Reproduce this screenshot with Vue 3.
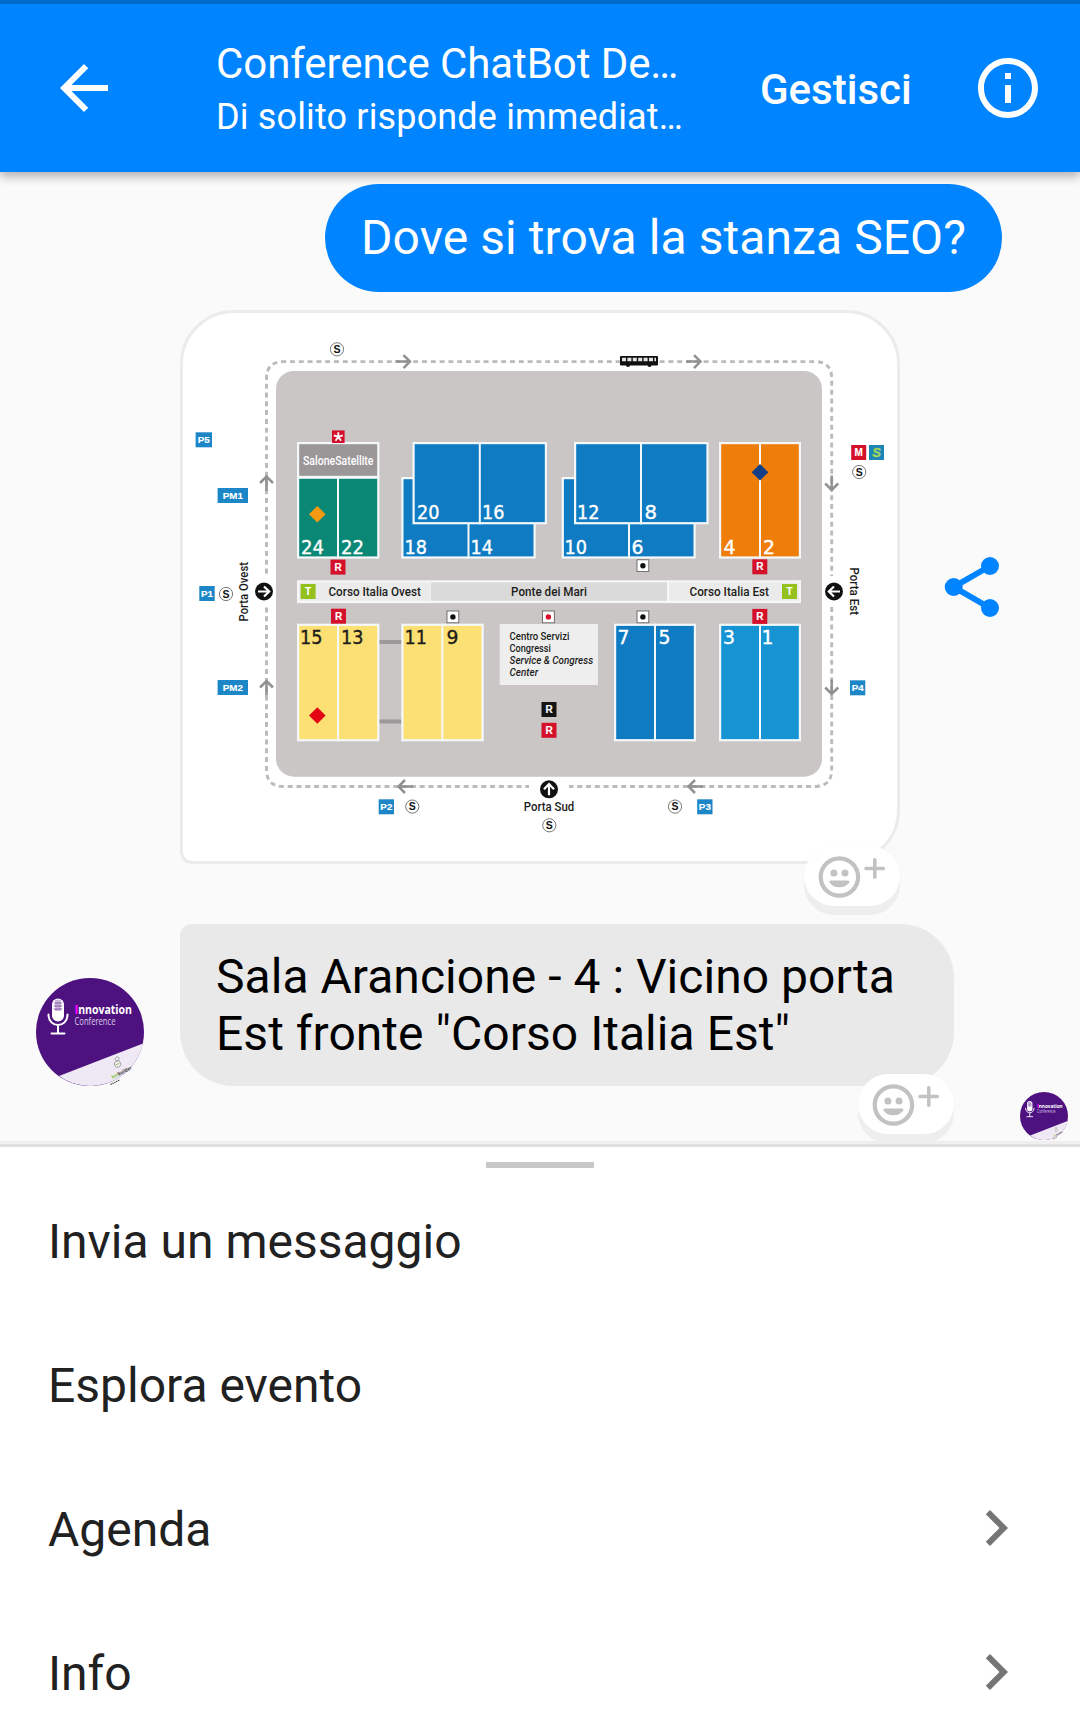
<script setup>
import { h } from 'vue'

const menu = [
  { label: 'Invia un messaggio', sub: false },
  { label: 'Esplora evento', sub: false },
  { label: 'Agenda', sub: true },
  { label: 'Info', sub: true },
]

const BLUE = '#0f7bc2'
const SKY = '#1593d3'
const YELLOW = '#fde073'
const ORANGE = '#ef7d0a'
const GREEN = '#0b8776'

// Halls: white frame with coloured cells inside
const halls = [
  { x: 297, y: 442, w: 82.4, h: 36, fill: '#9b9698' },
  { x: 297, y: 476.6, w: 82.4, h: 82, fill: GREEN, split: 338 },
  { x: 401.3, y: 477, w: 134.4, h: 81.6, fill: BLUE, split: 468.5 },
  { x: 412.5, y: 442, w: 134.5, h: 82.3, fill: BLUE, split: 479.8 },
  { x: 561.7, y: 477, w: 134, h: 81.6, fill: BLUE, split: 629 },
  { x: 574, y: 442, w: 134.6, h: 82.3, fill: BLUE, split: 641 },
  { x: 719, y: 442, w: 82, h: 116.6, fill: ORANGE, split: 760 },
  { x: 297, y: 623.7, w: 82.4, h: 117.6, fill: YELLOW, split: 338 },
  { x: 401.3, y: 623.7, w: 82.4, h: 117.6, fill: YELLOW, split: 442.3 },
  { x: 614, y: 623.7, w: 82, h: 117.6, fill: BLUE, split: 655 },
  { x: 719, y: 623.7, w: 82, h: 117.6, fill: SKY, split: 760 },
]

const numbers = [
  ['24', 301, 554, 23], ['22', 341, 554, 23], ['20', 417, 519, 22.5], ['16', 482, 519, 22.5],
  ['18', 404.5, 554, 22.5], ['14', 470.5, 554, 22.5], ['12', 577, 519, 22.5], ['8', 644.5, 519, 12.5],
  ['10', 564.5, 554, 22.5], ['6', 631.5, 554, 12], ['4', 723.5, 554, 12], ['2', 763, 554, 12],
  ['15', 300, 643.5, 22.5, 1], ['13', 341, 643.5, 22.5, 1], ['11', 404.5, 643.5, 22.5, 1], ['9', 446.5, 643.5, 12, 1],
  ['7', 617.5, 643.5, 12], ['5', 658.5, 643.5, 12], ['3', 723, 643.5, 12], ['1', 761.5, 643.5, 12],
]

const RED = '#d5102a'
const PBLUE = '#1c86c7'
const tags = [
  ['R', 330.5, 559.6, 15, RED], ['R', 331, 608.7, 15, RED],
  ['R', 752.3, 559.3, 15, RED], ['R', 752.3, 608.9, 15, RED],
  ['R', 541.5, 702, 15, '#151515'], ['R', 541.5, 722.8, 15, RED],
  ['T', 300.6, 584, 15, '#95c11f'], ['T', 782, 584, 15, '#95c11f'],
  ['M', 851.2, 445, 15, RED],
  ['P5', 195.6, 432.3, 16.4, PBLUE], ['PM1', 217.6, 488, 30.4, PBLUE],
  ['P1', 199.3, 586, 15.4, PBLUE], ['PM2', 217.6, 680, 30.4, PBLUE],
  ['P2', 378.7, 799.3, 15.3, PBLUE], ['P3', 697.2, 799.3, 15.3, PBLUE],
  ['P4', 850, 680.3, 15.3, PBLUE],
]

const stops = [[337, 349.3], [859.2, 472], [226, 594], [412.3, 806.6], [675, 806.6], [549.3, 825.3]]
const dots = [[447, 611], [637, 611], [637, 559.8], [542.5, 611, 1]]
const diamonds = [[317.3, 514.2, '#f59a12'], [760, 472.3, '#133f86'], [317.3, 715.5, '#e30613']]
// Direction arrows on the shuttle route: tip x, tip y, rotation
const arrows = [
  [410.5, 361.6, 0], [701, 361.6, 0], [266.5, 476, -90], [266.5, 680.5, -90],
  [831.7, 490.5, 90], [831.7, 694.5, 90], [398, 786.5, 180], [688, 786.5, 180],
]
const gates = [[264, 591.5, 0], [834, 591.5, 180], [549, 789.3, -90]]
const labels = [
  ['Corso Italia Ovest', 328.5, 595.7, 92.5, 12.5], ['Ponte dei Mari', 511, 595.7, 76, 12.5],
  ['Corso Italia Est', 689.5, 595.7, 79.5, 12.5], ['Porta Sud', 523.7, 811, 50.5, 12.5],
  ['Centro Servizi', 509.6, 640, 59.8, 10.4], ['Congressi', 509.6, 652, 41.2, 10.4],
]

const Avatar = () =>
  h('svg', { viewBox: '0 0 108 108', 'font-family': '"Open Sans", sans-serif', style: 'display:block;width:100%;height:100%' }, [
    h('circle', { cx: 54, cy: 54, r: 54, fill: '#4d1180' }),
    h('path', { d: 'M23 98 L107 65.5 A54 54 0 0 1 23 98Z', fill: '#eee9f4' }),
    h('rect', { x: 16, y: 20.5, width: 12, height: 23, rx: 6, fill: '#fff' }),
    h('path', { d: 'M18 25h8M17.5 28h9M17.5 31h9M20 22v11M22 21.5V33M24 22v11', stroke: '#4d1180', 'stroke-width': 0.6, fill: 'none' }),
    h('path', { d: 'M12.5 36.5c0 14 19 14 19 0M22 47v8.5M15.5 55.5h13', stroke: '#fff', 'stroke-width': 2, 'stroke-linecap': 'round', fill: 'none' }),
    h('text', { x: 38.2, y: 36, 'font-size': 13, 'font-weight': 700, fill: '#f0f' }, 'I'),
    h('text', { x: 42.2, y: 36, 'font-size': 12.5, 'font-weight': 700, fill: '#fff', textLength: 53.8, lengthAdjust: 'spacingAndGlyphs' }, 'nnovation'),
    h('text', { x: 38.5, y: 47, 'font-size': 11, 'font-weight': 400, fill: '#d9cbe8', textLength: 41, lengthAdjust: 'spacingAndGlyphs' }, 'Conference'),
    h('g', { transform: 'translate(82 87) rotate(-22)', fill: 'none', stroke: '#9a9a98', 'stroke-width': 0.8 }, [
      h('circle', { cx: 0, cy: -1, r: 3.3 }), h('circle', { cx: 1.5, cy: -6, r: 2 }), h('path', { d: 'M-2-1h4', stroke: '#8cc84b' }),
    ]),
    h('text', { transform: 'translate(76.5 101) rotate(-27)', 'font-size': 5, 'font-weight': 700, fill: '#333', textLength: 22, lengthAdjust: 'spacingAndGlyphs' }, [
      h('tspan', { fill: '#8cc84b' }, 'bot'), 'builder',
    ]),
    h('path', { d: 'M74.5 106.5l9-4.5', stroke: '#444', 'stroke-width': 1.1, 'stroke-dasharray': '1.5 .6' }),
  ])

const Reaction = () =>
  h('svg', { viewBox: '0 0 96 60', style: 'display:block;width:96px;height:60px' }, [
    h('circle', { cx: 35.4, cy: 31, r: 18.7, fill: 'none', stroke: '#c2c2c2', 'stroke-width': 4.2 }),
    h('circle', { cx: 29.9, cy: 27, r: 3.5, fill: '#c2c2c2' }),
    h('circle', { cx: 41, cy: 27, r: 3.5, fill: '#c2c2c2' }),
    h('path', { d: 'M26.8 34.6h17.2q1.7 0 1.3 1.6a10.7 8 0 0 1-19.8 0q-.4-1.6 1.3-1.6z', fill: '#c2c2c2' }),
    h('path', { d: 'M62 22.5h17.4M70.800 13.700v17.6', stroke: '#c2c2c2', 'stroke-width': 3.5, 'stroke-linecap': 'round' }),
  ])
</script>

<template>
  <div class="screen">
    <header class="bar">
      <svg class="icon back" viewBox="0 0 24 24" fill="#fff"><path d="M20 11H7.83l5.59-5.59L12 4l-8 8 8 8 1.41-1.41L7.83 13H20v-2z" /></svg>
      <div class="titles">
        <div class="title">Conference ChatBot De…</div>
        <div class="subtitle">Di solito risponde immediat…</div>
      </div>
      <div class="manage">Gestisci</div>
      <svg class="icon" viewBox="0 0 24 24" fill="#fff"><path d="M11 17h2v-6h-2v6zm1-15C6.48 2 2 6.48 2 12s4.480 10 10 10 10-4.480 10-10S17.520 2 12 2zm0 18c-4.410 0-8-3.590-8-8s3.590-8 8-8 8 3.590 8 8-3.590 8-8 8zM11 9h2V7h-2v2z" /></svg>
    </header>

    <main class="chat">
      <div class="bubble mine">Dove si trova la stanza SEO?</div>

      <div class="media-row">
        <div class="card">
          <svg class="map" viewBox="183 313 714 548">
            <g fill="none" stroke="#bcbaba" stroke-width="2.9" stroke-dasharray="5 3.8">
              <path d="M266.500 573.500V378.600Q266.500 361.600 283.500 361.600H814.700Q831.700 361.600 831.700 378.600V576" />
              <path d="M266.500 607.500V769.500Q266.500 786.500 283.500 786.500H529" />
              <path d="M831.700 607V769.500Q831.700 786.500 814.700 786.500H569" />
            </g>
            <rect x="276" y="371" width="546" height="405.700" rx="18" fill="#c9c6c5" />
            <g v-for="(a, i) in arrows" :key="'a' + i" :transform="`translate(${a[0]} ${a[1]}) rotate(${a[2]})`">
              <path d="M-15 0H-1M-7-6.500L-.5 0L-7 6.500" fill="none" stroke="#929090" stroke-width="2.500" />
            </g>

            <path d="M379 642h23M379 721.500h23" stroke="#9c999a" stroke-width="4" />
            <g v-for="(b, i) in halls" :key="'h' + i">
              <rect :x="b.x" :y="b.y" :width="b.w" :height="b.h" fill="#f4f8fa" />
              <rect :x="b.x + 2.200" :y="b.y + 2.200" :width="b.w - 4.400" :height="b.h - 4.400" :fill="b.fill" />
              <rect v-if="b.split" :x="b.split - 1" :y="b.y" width="2" :height="b.h" fill="#f4f8fa" />
            </g>
            <text x="303" y="465" font-size="12" font-weight="500" fill="#fff" textLength="70.500" lengthAdjust="spacingAndGlyphs">SaloneSatellite</text>

            <g font-family="'DejaVu Sans', sans-serif" font-size="20">
              <text v-for="n in numbers" :key="n[0]" :x="n[1]" :y="n[2]" :textLength="n[3]" lengthAdjust="spacingAndGlyphs" :fill="n[4] ? '#1d1d1b' : '#fff'" :stroke="n[4] ? '#1d1d1b' : '#fff'" stroke-width=".4">{{ n[0] }}</text>
            </g>
            <path v-for="(d, i) in diamonds" :key="'d' + i" :d="`M${d[0]} ${d[1] - 8.3}l8.300 8.300l-8.300 8.300l-8.300-8.300z`" :fill="d[2]" />

            <rect x="297" y="580.300" width="504" height="22.800" fill="#f7f7f7" />
            <rect x="299" y="582.300" width="131.500" height="18.500" fill="#ebebeb" />
            <rect x="431" y="582.300" width="236" height="18.500" fill="#dadada" />
            <rect x="669" y="582.300" width="130" height="18.500" fill="#ebebeb" />
            <rect x="499.700" y="624" width="98.300" height="61" fill="#eee" />
            <text v-for="l in labels" :key="l[0]" :x="l[1]" :y="l[2]" :textLength="l[3]" :font-size="l[4]" lengthAdjust="spacingAndGlyphs" font-weight="500" fill="#1d1d1b">{{ l[0] }}</text>
            <g font-size="10.400" font-weight="500" font-style="italic" fill="#1d1d1b">
              <text x="509.600" y="664" textLength="83.500" lengthAdjust="spacingAndGlyphs">Service &amp; Congress</text>
              <text x="509.600" y="676" textLength="28.500" lengthAdjust="spacingAndGlyphs">Center</text>
            </g>
            <g font-size="12.500" font-weight="500" fill="#1d1d1b">
              <text transform="translate(247.500 621.500) rotate(-90)" textLength="59.500" lengthAdjust="spacingAndGlyphs">Porta Ovest</text>
              <text transform="translate(850 567.500) rotate(90)" textLength="47.500" lengthAdjust="spacingAndGlyphs">Porta Est</text>
            </g>

            <g v-for="(t, i) in tags" :key="'t' + i">
              <rect :x="t[1]" :y="t[2]" :width="t[3]" height="15" :fill="t[4]" />
              <text :x="t[1] + t[3] / 2" :y="t[2] + 11" text-anchor="middle" font-family="'Liberation Sans', sans-serif" :font-size="t[0].length === 1 ? 10 : 9.8" font-weight="700" fill="#fff" stroke="#fff" stroke-width=".15">{{ t[0] }}</text>
            </g>
            <rect x="869" y="445" width="15" height="15" fill="#1c86b7" />
            <text x="876.500" y="457" text-anchor="middle" font-family="'Liberation Sans', sans-serif" font-size="13" font-weight="700" font-style="italic" fill="#a4d65e" stroke="#a4d65e" stroke-width=".4">S</text>
            <rect x="332" y="430.400" width="12.600" height="12.600" fill="#d5102a" />
            <path d="M338.300 436.900V432.200M338.300 436.900l4.500-1.500M338.300 436.900l2.800 3.900M338.300 436.900l-2.800 3.900M338.300 436.900l-4.500-1.500" stroke="#fff" stroke-width="1.800" />

            <g v-for="(s, i) in stops" :key="'s' + i">
              <circle :cx="s[0]" :cy="s[1]" r="6.600" fill="#fff" stroke="#555" stroke-width=".8" />
              <text :x="s[0]" :y="s[1] + 3.800" text-anchor="middle" font-family="'Liberation Sans', sans-serif" font-size="10.500" font-weight="700" fill="#111">S</text>
            </g>
            <g v-for="(d, i) in dots" :key="'o' + i">
              <rect :x="d[0]" :y="d[1]" width="11.800" height="11.800" fill="#fff" stroke="#555" stroke-width=".8" />
              <circle :cx="d[0] + 5.900" :cy="d[1] + 5.900" r="2.700" :fill="d[2] ? '#d5102a' : '#111'" />
            </g>
            <g v-for="(g, i) in gates" :key="'g' + i" :transform="`translate(${g[0]} ${g[1]}) rotate(${g[2]})`">
              <circle r="9" fill="#111" />
              <path d="M-6 0H5M0-5L5.200 0L0 5" fill="none" stroke="#fff" stroke-width="2.200" />
            </g>

            <rect x="620" y="356" width="38" height="9.500" rx="1" fill="#111" />
            <circle cx="628" cy="365" r="2" fill="#111" />
            <circle cx="649.500" cy="365" r="2" fill="#111" />
            <path d="M622 359.500h34" stroke="#e4e4e4" stroke-width="3.600" stroke-dasharray="4 1.400" />
          </svg>
          <div class="reaction"><Reaction /></div>
        </div>
        <svg class="icon share" viewBox="0 0 24 24">
          <path d="M18 5L5.900 12L18 19" fill="none" stroke="#0084ff" stroke-width="2" />
          <g fill="#0084ff"><circle cx="18" cy="5" r="3" /><circle cx="5.900" cy="12" r="3" /><circle cx="18" cy="19" r="3" /></g>
        </svg>
      </div>

      <div class="reply-row">
        <div class="avatar"><Avatar /></div>
        <div class="bubble theirs">
          Sala Arancione - 4 : Vicino porta<br />Est fronte "Corso Italia Est"
          <div class="reaction"><Reaction /></div>
        </div>
      </div>
      <div class="seen"><Avatar /></div>
    </main>

    <section class="sheet">
      <div class="handle"></div>
      <div v-for="m in menu" :key="m.label" class="item">
        <span>{{ m.label }}</span>
        <svg v-if="m.sub" class="icon" viewBox="0 0 24 24" fill="#757575"><path d="M10 6L8.590 7.410 13.170 12l-4.580 4.590L10 18l6-6z" /></svg>
      </div>
    </section>
  </div>
</template>

<style>
body {
  margin: 0;
  overflow: hidden;
}
</style>

<style scoped>
.screen {
  box-sizing: border-box;
  width: 1080px;
  height: 1734px;
  overflow: hidden;
  display: flex;
  flex-direction: column;
  background: #fafafa;
  font-family: Roboto, sans-serif;
}
.icon {
  width: 72px;
  height: 72px;
  flex: none;
}
.bar {
  box-sizing: border-box;
  height: 172px;
  flex: none;
  display: flex;
  align-items: center;
  padding: 0 36px 0 48px;
  border-top: 4px solid #006acc;
  background: #0084ff;
  color: #fff;
  position: relative;
  z-index: 1;
  box-shadow: 0 4px 10px rgba(0, 0, 0, 0.32);
}
.titles {
  width: 546px;
  margin-left: 96px;
  white-space: nowrap;
}
.title {
  font-size: 42px;
  line-height: 49px;
  letter-spacing: -0.08px;
}
.subtitle {
  margin-top: 8px;
  margin-bottom: -1px;
  font-size: 36px;
  line-height: 42px;
  letter-spacing: 0.15px;
}
.manage {
  flex: 1;
  font-size: 42px;
  font-weight: 500;
  line-height: 49px;
  padding-top: 2px;
  margin-left: -2px;
}
.chat {
  height: 969px;
  flex: none;
  display: flex;
  flex-direction: column;
}
.bubble {
  box-sizing: border-box;
  font-size: 48px;
  white-space: nowrap;
}
.mine {
  align-self: flex-end;
  width: 677px;
  height: 108px;
  margin: 12px 78px 0 0;
  padding: 26px 36px;
  line-height: 56px;
  letter-spacing: 0.08px;
  border-radius: 54px;
  background: #0084ff;
  color: #fff;
}
.media-row {
  display: flex;
  align-items: center;
  gap: 36px;
  margin: 18px 0 0 180px;
}
.card {
  position: relative;
  box-sizing: border-box;
  width: 720px;
  height: 554px;
  border: 3px solid #ebebeb;
  border-radius: 54px 54px 54px 12px;
  background: #fff;
}
.map {
  display: block;
  width: 714px;
  height: 548px;
}
.reaction {
  position: absolute;
  right: 0;
  bottom: -48px;
  width: 96px;
  height: 60px;
  border-radius: 30px;
  background: #fff;
  box-shadow: 0 9px 0 #eee, 0 0 3px rgba(0, 0, 0, 0.03);
}
.card .reaction {
  right: -3px;
  bottom: -45px;
}
.reply-row {
  display: flex;
  align-items: flex-end;
  gap: 36px;
  margin: 60px 0 0 36px;
}
.avatar {
  width: 108px;
  height: 108px;
}
.theirs {
  position: relative;
  width: 774px;
  height: 162px;
  padding: 24px 36px;
  line-height: 57px;
  letter-spacing: 0.04px;
  border-radius: 12px 54px 54px 54px;
  background: #e9e9e9;
  color: #000;
}
.seen {
  align-self: flex-end;
  width: 48px;
  height: 48px;
  margin: 6px 12px 0 0;
}
.sheet {
  flex: 1;
  border-top: 3px solid #e0e0e0;
  box-shadow: 0 -3px 0 #efefef;
  margin-top: 3px;
  background: #fff;
  color: #212121;
}
.handle {
  width: 108px;
  height: 6px;
  margin: 15px auto 0;
  background: #c8c8c8;
}
.item {
  display: flex;
  align-items: center;
  justify-content: space-between;
  height: 144px;
  padding: 0 48px;
  font-size: 48px;
  line-height: 56px;
}
.item span {
  padding-top: 4px;
}
</style>
